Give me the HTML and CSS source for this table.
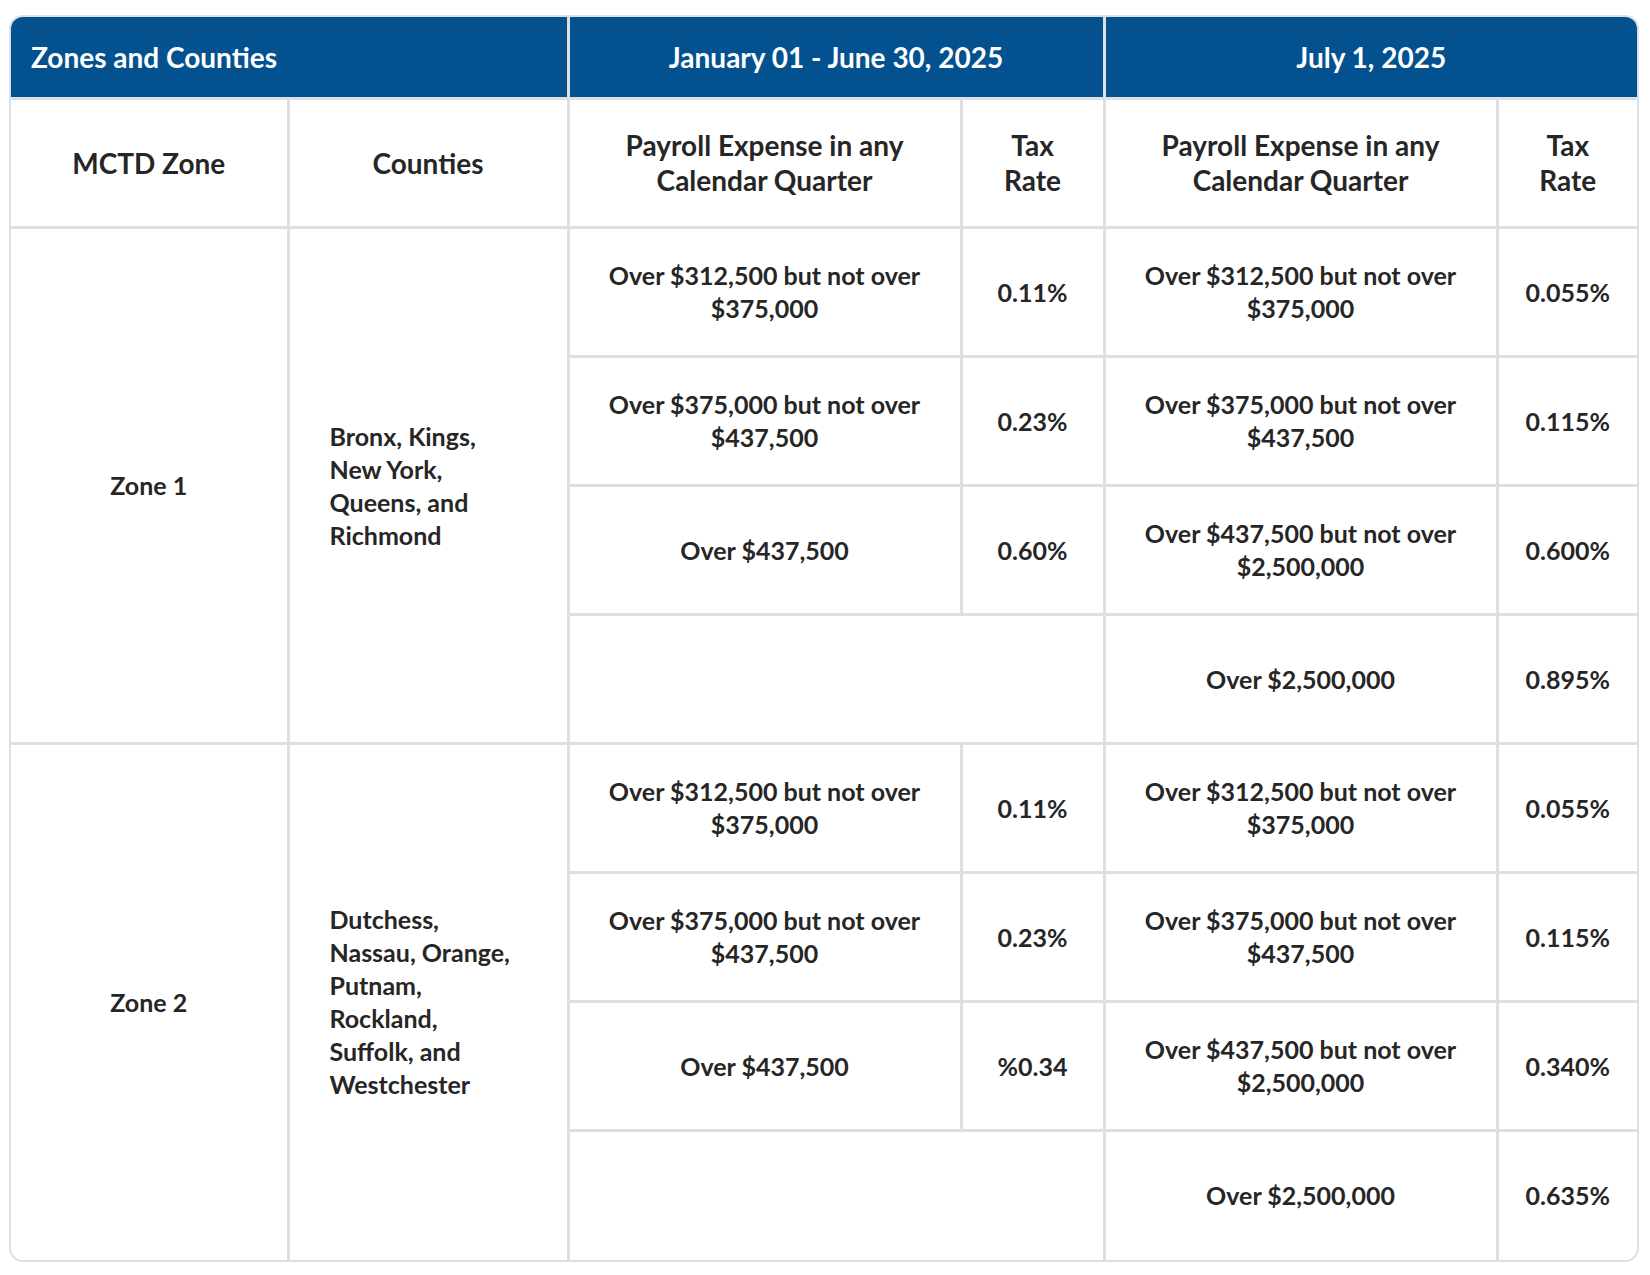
FILE: index.html
```html
<!DOCTYPE html>
<html lang="en">
<head>
<meta charset="utf-8">
<title>MCTD Zones and Tax Rates</title>
<link rel="stylesheet" href="styles.css">
</head>
<body>
<div class="wrap">
<table class="rates">
  <colgroup>
    <col class="c-zone"><col class="c-county"><col class="c-pay"><col class="c-rate"><col class="c-pay"><col class="c-rate2">
  </colgroup>
  <thead>
    <tr class="top">
      <th colspan="2" class="left">Zones and Counties</th>
      <th colspan="2">January 01 - June 30, 2025</th>
      <th colspan="2">July 1, 2025</th>
    </tr>
    <tr class="sub">
      <th>MCTD Zone</th>
      <th>Counties</th>
      <th class="pay">Payroll Expense in any Calendar Quarter</th>
      <th class="rate">Tax Rate</th>
      <th class="pay">Payroll Expense in any Calendar Quarter</th>
      <th class="rate">Tax Rate</th>
    </tr>
  </thead>
  <tbody>
    <tr>
      <td rowspan="4">Zone 1</td>
      <td rowspan="4" class="counties">Bronx, Kings,<br>New York,<br>Queens, and<br>Richmond</td>
      <td>Over $312,500 but not over $375,000</td>
      <td class="rate">0.11%</td>
      <td>Over $312,500 but not over $375,000</td>
      <td class="rate">0.055%</td>
    </tr>
    <tr>
      <td>Over $375,000 but not over $437,500</td>
      <td class="rate">0.23%</td>
      <td>Over $375,000 but not over $437,500</td>
      <td class="rate">0.115%</td>
    </tr>
    <tr>
      <td>Over $437,500</td>
      <td class="rate">0.60%</td>
      <td>Over $437,500 but not over $2,500,000</td>
      <td class="rate">0.600%</td>
    </tr>
    <tr>
      <td colspan="2"></td>
      <td>Over $2,500,000</td>
      <td class="rate">0.895%</td>
    </tr>
    <tr>
      <td rowspan="4">Zone 2</td>
      <td rowspan="4" class="counties">Dutchess,<br>Nassau, Orange,<br>Putnam,<br>Rockland,<br>Suffolk, and<br>Westchester</td>
      <td>Over $312,500 but not over $375,000</td>
      <td class="rate">0.11%</td>
      <td>Over $312,500 but not over $375,000</td>
      <td class="rate">0.055%</td>
    </tr>
    <tr>
      <td>Over $375,000 but not over $437,500</td>
      <td class="rate">0.23%</td>
      <td>Over $375,000 but not over $437,500</td>
      <td class="rate">0.115%</td>
    </tr>
    <tr>
      <td>Over $437,500</td>
      <td class="rate">%0.34</td>
      <td>Over $437,500 but not over $2,500,000</td>
      <td class="rate">0.340%</td>
    </tr>
    <tr>
      <td colspan="2"></td>
      <td>Over $2,500,000</td>
      <td class="rate">0.635%</td>
    </tr>
  </tbody>
</table>
</div>
</body>
</html>
```

FILE: styles.css
```css
html, body {
  margin: 0;
  padding: 0;
  background: #ffffff;
}

body {
  font-family: "Lato", "Liberation Sans", sans-serif;
  color: #262626;
}

.wrap {
  width: 1626px;
  margin: 15px 0 0 9px;
  border: 2px solid #dcdfe3;
  border-radius: 14px;
  overflow: hidden;
}

.rates {
  width: 1626px;
  table-layout: fixed;
  border-collapse: collapse;
  border-style: hidden;
}

.c-zone { width: 277px; }
.c-county { width: 280px; }
.c-pay { width: 393px; }
.c-rate { width: 143px; }
.c-rate2 { width: 140px; }

.rates th,
.rates td {
  border: 3px solid #dcdfe3;
  text-align: center;
  vertical-align: middle;
  font-size: 25px;
  line-height: 33px;
}

.rates th {
  font-weight: 700;
  font-size: 28px;
  line-height: 35px;
}

.rates td {
  font-weight: 700;
  padding: 0 38px;
}

.rates td.rate {
  padding: 0 8px;
}

.top th {
  height: 80px;
  background: #03528f;
  color: #ffffff;
  padding: 0 20px;
}

.top th.left {
  text-align: left;
}

.sub th {
  height: 126px;
  padding: 0 16px;
}

.sub th.pay {
  padding: 0 40px;
}

.sub th.rate {
  padding: 0 30px;
}

.rates tbody tr {
  height: 129px;
}

.rates td.counties {
  text-align: left;
  padding: 0 20px 0 40px;
}
```
